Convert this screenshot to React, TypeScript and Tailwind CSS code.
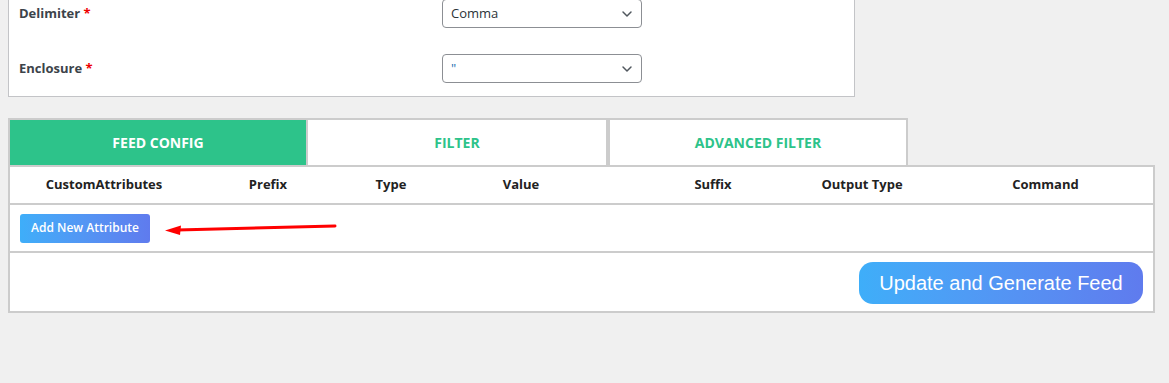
import { ChevronDown } from 'lucide-react';

const font = { fontFamily: '"Open Sans", "Noto Sans", sans-serif' };

function SelectBox(props: { value: string; valueClass?: string }) {
    return (
        <div className="w-[200px] h-[29px] border border-[#8c8f94] rounded-[4px] bg-white flex items-center justify-between pl-[8px] pr-[6px]">
            <span className={'text-[13px] ' + (props.valueClass ?? 'text-[#2c3338]')}>{props.value}</span>
            <ChevronDown className="w-[16px] h-[16px] text-[#50575e]" strokeWidth={2.2} />
        </div>
    );
}

function FieldRow(props: { label: string; value: string; valueClass?: string }) {
    return (
        <div className="flex items-center h-[29px]">
            <div className="w-[423px] text-[13px] font-bold text-[#3c434a]">
                {props.label} <span className="text-[#e00]">*</span>
            </div>
            <SelectBox value={props.value} valueClass={props.valueClass} />
        </div>
    );
}

const columns = [
    { title: 'CustomAttributes', w: 'w-[188px]' },
    { title: 'Prefix', w: 'w-[140px]' },
    { title: 'Type', w: 'w-[106px]' },
    { title: 'Value', w: 'w-[154px]' },
    { title: 'Suffix', w: 'w-[230px]' },
    { title: 'Output Type', w: 'w-[68px]' },
    { title: 'Command', w: 'flex-1 pl-[42px]' },
];

export default function App() {
    return (
        <section className="bg-[#f0f0f0] min-h-screen w-[1169px] h-[383px] overflow-hidden" style={font}>
            <div className="ml-[8px] w-[847px] bg-white border border-t-0 border-[#c3c4c7] pl-[10px] pb-[13px] -mt-[1px]">
                <div className="flex flex-col gap-[26px]">
                    <FieldRow label="Delimiter" value="Comma" />
                    <FieldRow label="Enclosure" value={'"'} valueClass="text-[#2271b1]" />
                </div>
            </div>

            <div className="ml-[8px] mt-[21px] flex">
                <div className="w-[300px] h-[47px] border-2 border-b-0 border-[#cccccc] bg-[#2dc38a] flex items-center justify-center">
                    <span className="text-white font-bold text-[14px]">FEED CONFIG</span>
                </div>
                <div className="w-[300px] h-[47px] border-2 border-b-0 border-l-0 border-[#cccccc] bg-white flex items-center justify-center">
                    <span className="text-[#2dc38a] font-bold text-[14px]">FILTER</span>
                </div>
                <div className="w-[300px] h-[47px] border-2 border-b-0 border-[#cccccc] bg-white flex items-center justify-center">
                    <span className="text-[#2dc38a] font-bold text-[14px]">ADVANCED FILTER</span>
                </div>
            </div>

            <div className="ml-[8px] w-[1147px] border-2 border-[#cccccc] bg-white">
                <div className="flex h-[38px] items-center border-b-2 border-[#cccccc]">
                    {columns.map((c) => (
                        <div key={c.title} className={c.w + ' flex justify-center whitespace-nowrap text-[13px] font-bold text-[#222]'}>
                            {c.title}
                        </div>
                    ))}
                </div>
                <div className="flex items-center h-[48px] border-b-2 border-[#cccccc] pl-[10px]">
                    <button className="h-[29px] px-[11px] rounded-[3px] bg-gradient-to-r from-[#3eaef9] to-[#5f7bee] text-white text-[12px] font-semibold">
                        Add New Attribute
                    </button>
                    <svg width="172" height="12" viewBox="0 0 172 12" className="ml-[15px] mt-[2px]">
                        <line x1="12" y1="7" x2="170" y2="3" stroke="#f00" strokeWidth="3" strokeLinecap="round" />
                        <polygon points="0,7.5 16,2.5 15,12" fill="#f00" />
                    </svg>
                </div>
                <div className="flex justify-end h-[58px] pt-[9px] pr-[10px]">
                    <button
                        className="h-[42px] w-[284px] rounded-[14px] bg-gradient-to-r from-[#3eaef9] to-[#5f7bee] text-white text-[20px]"
                        style={{ fontFamily: '"Liberation Sans", Arial, sans-serif' }}
                    >
                        Update and Generate Feed
                    </button>
                </div>
            </div>
        </section>
    );
}
